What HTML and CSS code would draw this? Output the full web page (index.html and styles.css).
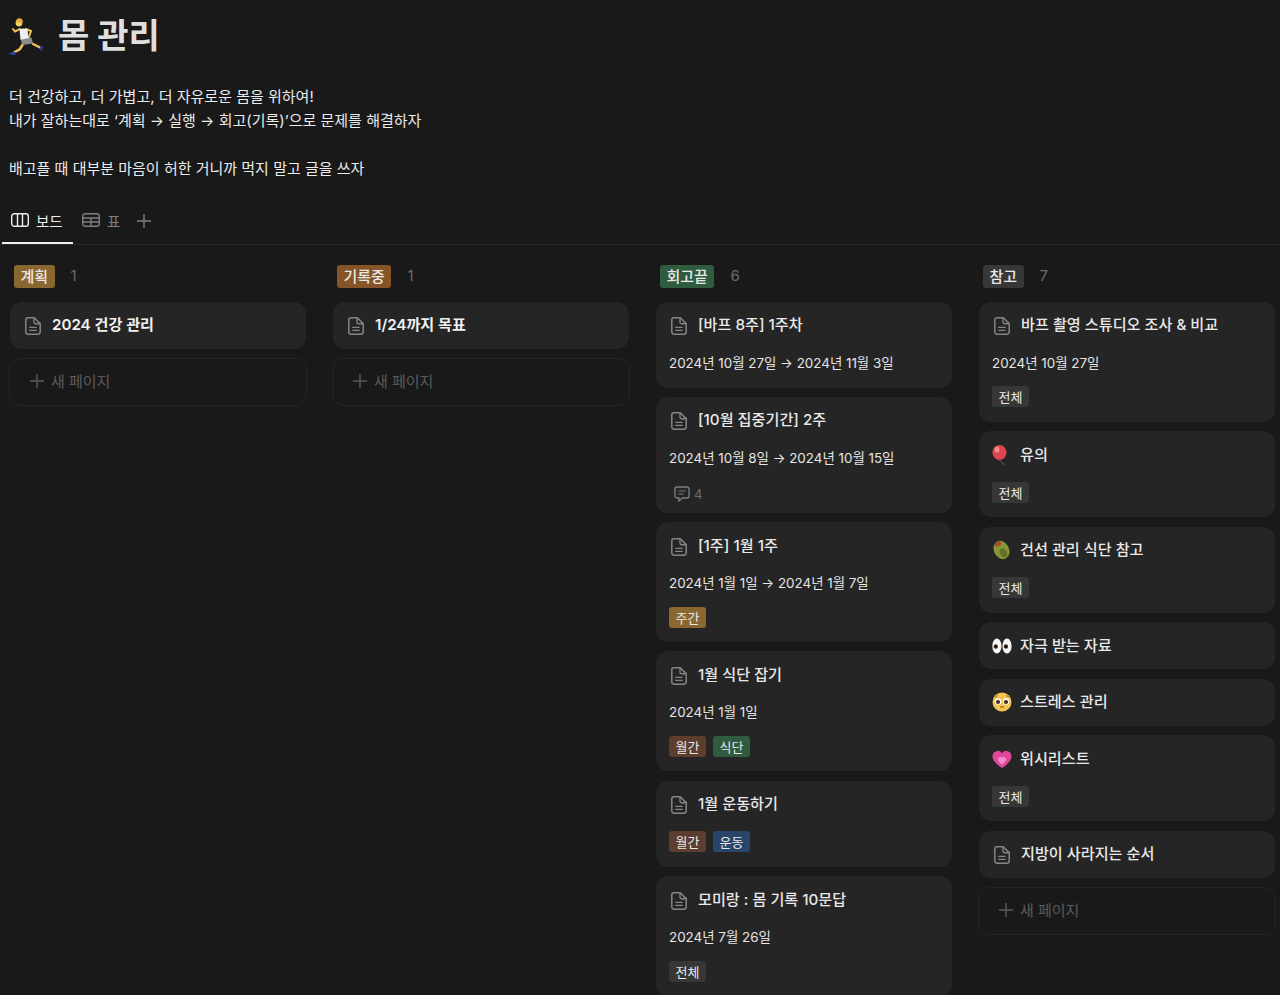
FILE: index.html
```html
<!DOCTYPE html>
<html lang="ko">
<head>
<meta charset="utf-8">
<title>몸 관리</title>
<link rel="stylesheet" href="styles.css">
</head>
<body>
<svg class="defs" width="0" height="0" aria-hidden="true">
  <defs>
    <symbol id="doc" viewBox="0 0 16 18">
      <path d="M3 .8h6.200L15.200 6.600V15a2.200 2.200 0 0 1-2.200 2.200H3A2.200 2.200 0 0 1 .8 15V3A2.200 2.200 0 0 1 3 .8Z" fill="none" stroke="#858585" stroke-width="1.500"/>
      <path d="M9 1.200V5a1.700 1.700 0 0 0 1.700 1.700h4.200" fill="none" stroke="#858585" stroke-width="1.400"/>
      <path d="M4.200 10.400h7.400M4.200 13.300h7.400" stroke="#858585" stroke-width="1.300" fill="none"/>
    </symbol>
    <symbol id="plus" viewBox="0 0 14 14">
      <path d="M7 0v14M0 7h14" stroke="currentColor" stroke-width="1.400" fill="none"/>
    </symbol>
  </defs>
</svg>
<header class="head">
  <div class="title-row">
    <svg class="runner" viewBox="0 0 36 38" aria-hidden="true">
      <path d="M25 26l5 2.500 3 1.500" stroke="#f1c550" stroke-width="2.300" fill="none" stroke-linecap="round"/>
      <path d="M15 26l-3 5-6 3.500" stroke="#f1c550" stroke-width="2.500" fill="none" stroke-linecap="round"/>
      <path d="M12 11c-2 .8-3.500 1.800-5 2.500l-2-2.500" stroke="#f1c550" stroke-width="2" fill="none" stroke-linecap="round"/>
      <path d="M18 11l5 2-2.500 7" stroke="#f1c550" stroke-width="2" fill="none" stroke-linecap="round"/>
      <path d="M12.500 21l11-1.500 1.500 6-10.500 1.500Z" fill="#8a8a8a"/>
      <path d="M11.500 11.200c2.500-1 5.500-1 8 0l1 9-8 1.500Z" fill="#efefef"/>
      <circle cx="11" cy="5" r="3.400" fill="#f6cf63"/>
      <path d="M7.800 4.500C7.500 1.800 9.500 0 12 .3c2.200.3 3.200 2.200 2.600 4-.4 1-1 1.500-1.600 2C13 4 10.500 3 7.800 4.500Z" fill="#e3ae3c"/>
      <path d="M0 35.500l5-1.700 3.500.7-1 2.500-3 .3Z" fill="#2a3d8a"/>
      <path d="M32.500 27.500l2.500.7-.8 5.300-2.700-2Z" fill="#2a3d8a"/>
    </svg>
    <h1 class="title">몸 관리</h1>
  </div>
  <div class="desc">
    <p>더 건강하고, 더 가볍고, 더 자유로운 몸을 위하여!</p>
    <p>내가 잘하는대로 ‘계획 → 실행 → 회고(기록)’으로 문제를 해결하자</p>
    <p class="blank">&nbsp;</p>
    <p>배고플 때 대부분 마음이 허한 거니까 먹지 말고 글을 쓰자</p>
  </div>
</header>
<nav class="tabs">
  <div class="tab active">
    <svg class="tab-ico" viewBox="0 0 18 14" aria-hidden="true">
      <rect x=".7" y=".7" width="16.600" height="12.600" rx="2.600" fill="none" stroke="currentColor" stroke-width="1.400"/>
      <path d="M6.500 1v12M11.500 1v12" stroke="currentColor" stroke-width="1.400" fill="none"/>
    </svg>
    <span>보드</span>
  </div>
  <div class="tab">
    <svg class="tab-ico" viewBox="0 0 18 14" aria-hidden="true">
      <rect x=".7" y=".7" width="16.600" height="12.600" rx="2.600" fill="none" stroke="currentColor" stroke-width="1.400"/>
      <path d="M1 5h16M1 9h16M9 5v8" stroke="currentColor" stroke-width="1.400" fill="none"/>
    </svg>
    <span>표</span>
  </div>
  <svg class="tab-plus" aria-hidden="true"><use href="#plus"/></svg>
</nav>
<main class="board">
  <section class="col">
    <div class="col-head"><span class="tag yellow big">계획</span><span class="count">1</span></div>
    <article class="card">
      <div class="card-title"><svg class="doc"><use href="#doc"/></svg><span class="bold">2024 건강 관리</span></div>
    </article>
    <div class="add"><svg class="add-plus"><use href="#plus"/></svg><span>새 페이지</span></div>
  </section>

  <section class="col">
    <div class="col-head"><span class="tag orange big">기록중</span><span class="count">1</span></div>
    <article class="card">
      <div class="card-title"><svg class="doc"><use href="#doc"/></svg><span class="bold">1/24까지 목표</span></div>
    </article>
    <div class="add"><svg class="add-plus"><use href="#plus"/></svg><span>새 페이지</span></div>
  </section>

  <section class="col dense">
    <div class="col-head"><span class="tag green big">회고끝</span><span class="count">6</span></div>
    <article class="card">
      <div class="card-title"><svg class="doc"><use href="#doc"/></svg><span>[바프 8주] 1주차</span></div>
      <div class="props"><div class="row">2024년 10월 27일 → 2024년 11월 3일</div></div>
    </article>
    <article class="card">
      <div class="card-title"><svg class="doc"><use href="#doc"/></svg><span>[10월 집중기간] 2주</span></div>
      <div class="props">
        <div class="row">2024년 10월 8일 → 2024년 10월 15일</div>
        <div class="comments">
          <svg class="cmt" viewBox="0 0 16 16" aria-hidden="true">
            <path d="M3 1h10a2 2 0 0 1 2 2v7a2 2 0 0 1-2 2H8.500l-3.500 3v-3H3a2 2 0 0 1-2-2V3a2 2 0 0 1 2-2Z" fill="none" stroke="#7f7f7f" stroke-width="1.300"/>
            <path d="M4.500 5h7M4.500 8h5" stroke="#7f7f7f" stroke-width="1.200" fill="none"/>
          </svg>
          <span>4</span>
        </div>
      </div>
    </article>
    <article class="card">
      <div class="card-title"><svg class="doc"><use href="#doc"/></svg><span>[1주] 1월 1주</span></div>
      <div class="props">
        <div class="row">2024년 1월 1일 → 2024년 1월 7일</div>
        <div class="row tags"><span class="tag yellow">주간</span></div>
      </div>
    </article>
    <article class="card">
      <div class="card-title"><svg class="doc"><use href="#doc"/></svg><span>1월 식단 잡기</span></div>
      <div class="props">
        <div class="row">2024년 1월 1일</div>
        <div class="row tags"><span class="tag brown">월간</span><span class="tag green">식단</span></div>
      </div>
    </article>
    <article class="card">
      <div class="card-title"><svg class="doc"><use href="#doc"/></svg><span>1월 운동하기</span></div>
      <div class="props">
        <div class="row tags"><span class="tag brown">월간</span><span class="tag blue">운동</span></div>
      </div>
    </article>
    <article class="card">
      <div class="card-title"><svg class="doc"><use href="#doc"/></svg><span>모미랑 : 몸 기록 10문답</span></div>
      <div class="props">
        <div class="row">2024년 7월 26일</div>
        <div class="row tags"><span class="tag gray">전체</span></div>
      </div>
    </article>
  </section>

  <section class="col">
    <div class="col-head"><span class="tag gray big">참고</span><span class="count">7</span></div>
    <article class="card">
      <div class="card-title"><svg class="doc"><use href="#doc"/></svg><span>바프 촬영 스튜디오 조사 &amp; 비교</span></div>
      <div class="props">
        <div class="row">2024년 10월 27일</div>
        <div class="row tags"><span class="tag gray">전체</span></div>
      </div>
    </article>
    <article class="card">
      <div class="card-title">
        <svg class="emoji" viewBox="0 0 20 20" aria-hidden="true">
          <ellipse cx="7.500" cy="7.500" rx="7" ry="7.500" fill="#dd4650"/>
          <ellipse cx="5" cy="4.500" rx="2.500" ry="3" fill="#f38a8c"/>
          <path d="M7.500 15c1 2 3 3.500 6 4.500" stroke="#6b6b6b" stroke-width=".8" fill="none"/>
        </svg>
        <span>유의</span>
      </div>
      <div class="props"><div class="row tags"><span class="tag gray">전체</span></div></div>
    </article>
    <article class="card">
      <div class="card-title">
        <svg class="emoji" viewBox="0 0 20 20" aria-hidden="true">
          <ellipse cx="9.500" cy="10" rx="7.500" ry="9.500" fill="#88963a" transform="rotate(-28 9.500 10)"/>
          <ellipse cx="11.500" cy="13" rx="3.500" ry="5" fill="#667326" transform="rotate(-28 11.500 13)"/>
          <ellipse cx="6" cy="4" rx="3.200" ry="2.200" fill="#a8442c" transform="rotate(-20 6 4)"/>
        </svg>
        <span>건선 관리 식단 참고</span>
      </div>
      <div class="props"><div class="row tags"><span class="tag gray">전체</span></div></div>
    </article>
    <article class="card">
      <div class="card-title">
        <svg class="emoji" viewBox="0 0 20 18" aria-hidden="true">
          <ellipse cx="4.900" cy="9" rx="4.600" ry="7.500" fill="#f7f7f7"/>
          <ellipse cx="15" cy="9" rx="4.600" ry="7.500" fill="#f7f7f7"/>
          <circle cx="3.800" cy="9.500" r="2.200" fill="#5a2f14"/>
          <circle cx="13.900" cy="9.500" r="2.200" fill="#5a2f14"/>
          <circle cx="3.800" cy="9.500" r="1.200" fill="#120a06"/>
          <circle cx="13.900" cy="9.500" r="1.200" fill="#120a06"/>
        </svg>
        <span>자극 받는 자료</span>
      </div>
    </article>
    <article class="card">
      <div class="card-title">
        <svg class="emoji" viewBox="0 0 20 20" aria-hidden="true">
          <circle cx="10" cy="10" r="9.500" fill="#f5c64f"/>
          <circle cx="6" cy="9.500" r="3.200" fill="#fff"/>
          <circle cx="14" cy="9.500" r="3.200" fill="#fff"/>
          <circle cx="6" cy="10" r="2.100" fill="#4a2d16"/>
          <circle cx="14" cy="10" r="2.100" fill="#4a2d16"/>
          <path d="M8 15.500c1.200-1 2.800-1 4 0" stroke="#7a4a1a" stroke-width="1" fill="none"/>
          <path d="M3 5l3-1.500M17 5l-3-1.500" stroke="#a3702a" stroke-width="1" fill="none"/>
        </svg>
        <span>스트레스 관리</span>
      </div>
    </article>
    <article class="card">
      <div class="card-title">
        <svg class="emoji" viewBox="0 0 20 18" aria-hidden="true">
          <path d="M10 18C4 14 .5 10.500.5 6A5.200 5.200 0 0 1 10 3.200 5.200 5.200 0 0 1 19.500 6c0 4.500-3.500 8-9.500 12Z" fill="#e2479c"/>
          <path d="M10 14.500c-2.500-1.700-4-3.500-4-5.500a2.300 2.300 0 0 1 4-1.500 2.300 2.300 0 0 1 4 1.500c0 2-1.500 3.800-4 5.500Z" fill="#f28cc8"/>
        </svg>
        <span>위시리스트</span>
      </div>
      <div class="props"><div class="row tags"><span class="tag gray">전체</span></div></div>
    </article>
    <article class="card">
      <div class="card-title"><svg class="doc"><use href="#doc"/></svg><span>지방이 사라지는 순서</span></div>
    </article>
    <div class="add"><svg class="add-plus"><use href="#plus"/></svg><span>새 페이지</span></div>
  </section>
</main>
</body>
</html>
```
FILE: styles.css
```css
* { box-sizing: border-box; margin: 0; padding: 0; }
html, body { height: 995px; overflow: hidden; }
body {
  background: #191919;
  color: #e9e9e9;
  font-family: Inter, "Noto Sans CJK KR", sans-serif;
  font-size: 15px;
}
.defs { position: absolute; }
.head { padding: 0 9px; height: 198px; }
.title-row { display: flex; align-items: center; height: 71px; gap: 14px; }
.runner { width: 36px; height: 38px; flex: none; margin-left: -1px; margin-top: 2px; }
.title { font-size: 34px; font-weight: 700; color: #dfdfdf; line-height: 1; }
.desc { margin-top: 13.500px; font-size: 15px; line-height: 24px; color: #ececec; }
.tabs {
  display: flex;
  align-items: stretch;
  height: 47px;
  border-bottom: 1px solid #2b2b2b;
  padding-left: 2px;
}
.tab {
  display: flex;
  align-items: center;
  gap: 7px;
  padding: 0 9px 2px;
  font-size: 14.500px;
  color: #7f7f7f;
  height: 46px;
}
.tab.active { color: #ececec; border-bottom: 2px solid #ececec; padding: 0 10px 0 9px; width: 71px; }
.tab-ico { width: 18px; height: 14px; flex: none; }
.tab-plus { width: 14px; height: 14px; color: #7f7f7f; align-self: center; margin: 0 0 0 8px; }
.board { display: flex; gap: 27px; padding-left: 10px; }
.col { width: 296px; flex: none; display: flex; flex-direction: column; gap: 9.500px; }
.col.dense { gap: 9.300px; }
.col-head { display: flex; align-items: center; height: 22px; margin: 20px 0 5.100px 4px; gap: 16px; }
.col.dense .col-head { margin-bottom: 5.300px; }
.count { font-size: 15px; color: #6b6b6b; padding-bottom: 1px; }
.card {
  background: #252525;
  border-radius: 12px;
  padding: 8px 13px;
}
.card-title {
  display: flex;
  align-items: center;
  height: 31px;
  padding-bottom: 4px;
  font-size: 15.150px;
  font-weight: 500;
  color: #e9e9e9;
}
.bold { font-weight: 600; color: #f0f0f0; }
.doc { width: 16px; height: 18px; flex: none; margin: 6px 11px 0 2px; }
.emoji { width: 20px; height: 20px; flex: none; margin: 4px 8px 0 0; }
.props { padding: 10px 0 5px; }
.row { height: 24px; padding-bottom: 2px; display: flex; align-items: center; font-size: 13.400px; color: #e6e6e6; }
.row + .row { margin-top: 10px; }
.tags { gap: 7px; padding-bottom: 0; }
.tag {
  display: inline-flex;
  align-items: center;
  height: 21px;
  padding: 0 6.500px;
  border-radius: 3px;
  font-size: 13px;
  color: #e9e9e9;
}
.tag.big { height: 23px; padding: 0 6.500px 1px; font-size: 15px; font-weight: 500; }
.yellow { background: #89672f; }
.orange { background: #855527; }
.green { background: #2f5b3f; }
.brown { background: #5c3d2e; }
.blue { background: #28456c; }
.gray { background: #373737; }
.comments {
  display: flex;
  align-items: center;
  gap: 4px;
  height: 12px;
  margin-top: 18px;
  padding-left: 5px;
  font-size: 13px;
  color: #6f6f6f;
}
.cmt { width: 16px; height: 16px; flex: none; }
.add {
  display: flex;
  align-items: center;
  height: 48px;
  width: 298px;
  margin: -0.400px 0 0 -1px;
  padding: 0 0 2px 20px;
  gap: 7px;
  border: 1px solid #252525;
  border-radius: 12px;
  font-size: 15px;
  color: #5b5b5b;
}
.add-plus { width: 14px; height: 14px; flex: none; color: #5b5b5b; }
```
